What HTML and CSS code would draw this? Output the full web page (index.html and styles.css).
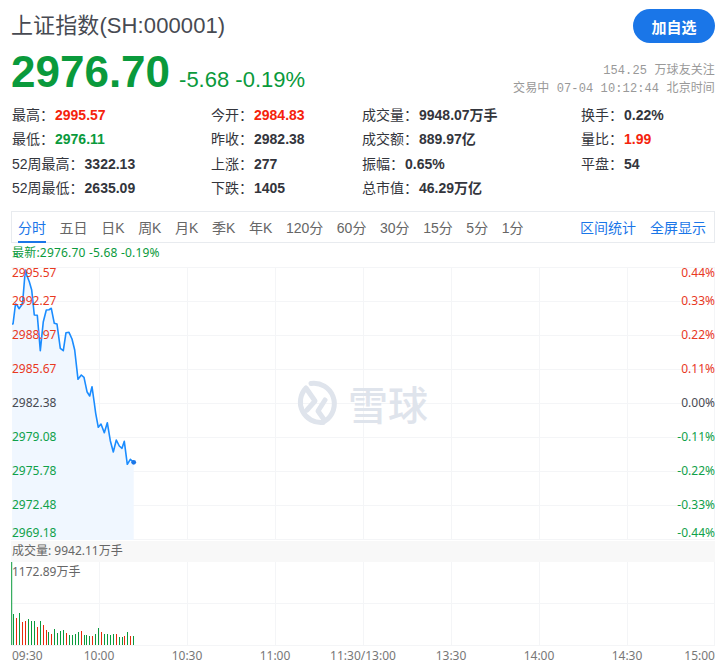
FILE: index.html
```html
<!DOCTYPE html>
<html lang="zh-CN">
<head>
    <meta charset="UTF-8">
    <title>上证指数(SH:000001)</title>
    <link rel="stylesheet" href="styles.css">
</head>
<body>
    <div class="page">
        <!-- Cabecera -->
        <div class="title-row">
            <h1 class="stock-name">上证指数(SH:000001)</h1>
            <button class="follow-btn">加自选</button>
        </div>

        <div class="price-row">
            <div class="price-main">
                <span class="price">2976.70</span>
                <span class="change">-5.68 -0.19%</span>
            </div>
            <div class="meta">
                <div>154.25 万球友关注</div>
                <div>交易中 07-04 10:12:44 北京时间</div>
            </div>
        </div>

        <!-- Tabla de datos -->
        <div class="stats">
            <div>最高：<b class="up">2995.57</b></div>
            <div>今开：<b class="up">2984.83</b></div>
            <div>成交量：<b>9948.07万手</b></div>
            <div>换手：<b>0.22%</b></div>
            <div>最低：<b class="down">2976.11</b></div>
            <div>昨收：<b>2982.38</b></div>
            <div>成交额：<b>889.97亿</b></div>
            <div>量比：<b class="up">1.99</b></div>
            <div>52周最高：<b>3322.13</b></div>
            <div>上涨：<b>277</b></div>
            <div>振幅：<b>0.65%</b></div>
            <div>平盘：<b>54</b></div>
            <div>52周最低：<b>2635.09</b></div>
            <div>下跌：<b>1405</b></div>
            <div>总市值：<b>46.29万亿</b></div>
        </div>

        <!-- Pestañas -->
        <div class="tabs">
            <div class="tab-list">
                <a class="tab active">分时</a>
                <a class="tab">五日</a>
                <a class="tab">日K</a>
                <a class="tab">周K</a>
                <a class="tab">月K</a>
                <a class="tab">季K</a>
                <a class="tab">年K</a>
                <a class="tab">120分</a>
                <a class="tab">60分</a>
                <a class="tab">30分</a>
                <a class="tab">15分</a>
                <a class="tab">5分</a>
                <a class="tab">1分</a>
            </div>
            <div class="tab-tools">
                <a>区间统计</a>
                <a>全屏显示</a>
            </div>
        </div>

        <div class="latest">最新:2976.70 -5.68 -0.19%</div>

        <!-- Gráfico de precio -->
        <div class="price-chart">
            <svg class="chart-svg" width="705" height="274" viewBox="11 267 705 274">
                <path class="grid" d="M11 267.5H715M11 301.5H715M11 335.5H715M11 369.5H715M11 403.5H715M11 437.5H715M11 471.5H715M11 505.5H715M11 539.5H715"/>
                <path class="grid" d="M99.5 267V539M187.5 267V539M275.5 267V539M363.5 267V539M451.5 267V539M539.5 267V539M627.5 267V539M714.5 267V539"/>
                <path class="area" d="M12 324L13 324L15.5 304L17 305L19 308.7L21.7 305L22.7 301.7L25.3 270L26.7 275L29.3 281.7L31.7 290L34.3 315L37.3 315.3L40.3 350.7L43.3 321.7L46.3 310L49 309.7L51.3 308.3L54.3 323.3L57 324L60.3 348.3L63.3 350.7L66 332.7L69 332.3L72 339L74.7 350L78 379.3L81.3 375L84 377.3L87 391.7L89.7 396L92 386.7L94.3 403L95.7 413.3L98.3 427.3L101 424L104.3 432.7L107.3 422.7L110.3 440.7L113.3 452L116.3 440L119.3 446L122 448.3L124.3 441.3L127.3 464.3L130.3 459.3L133.7 462.3V540H12Z"/>
                <path class="line" d="M12 324L13 324L15.5 304L17 305L19 308.7L21.7 305L22.7 301.7L25.3 270L26.7 275L29.3 281.7L31.7 290L34.3 315L37.3 315.3L40.3 350.7L43.3 321.7L46.3 310L49 309.7L51.3 308.3L54.3 323.3L57 324L60.3 348.3L63.3 350.7L66 332.7L69 332.3L72 339L74.7 350L78 379.3L81.3 375L84 377.3L87 391.7L89.7 396L92 386.7L94.3 403L95.7 413.3L98.3 427.3L101 424L104.3 432.7L107.3 422.7L110.3 440.7L113.3 452L116.3 440L119.3 446L122 448.3L124.3 441.3L127.3 464.3L130.3 459.3L133.7 462.3"/>
                <circle class="dot" cx="133.7" cy="462.3" r="2.4"/>
            </svg>

            <div class="watermark">
                <svg class="watermark-logo" width="50" height="50" viewBox="0 0 50 50">
                    <path d="M19 5.5A20.5 20.5 0 0 1 33 43L26 33L33 22"/>
                    <path d="M31 44.5A20.5 20.5 0 0 1 14 10L23 23L15 32"/>
                </svg>
                <span>雪球</span>
            </div>

            <div class="scale scale-left">
                <span class="up first">2995.57</span>
                <span class="up">2992.27</span>
                <span class="up">2988.97</span>
                <span class="up">2985.67</span>
                <span>2982.38</span>
                <span class="down">2979.08</span>
                <span class="down">2975.78</span>
                <span class="down">2972.48</span>
                <span class="down last">2969.18</span>
            </div>
            <div class="scale scale-right">
                <span class="up first">0.44%</span>
                <span class="up">0.33%</span>
                <span class="up">0.22%</span>
                <span class="up">0.11%</span>
                <span>0.00%</span>
                <span class="down">-0.11%</span>
                <span class="down">-0.22%</span>
                <span class="down">-0.33%</span>
                <span class="down last">-0.44%</span>
            </div>
        </div>

        <div class="volume-head">成交量: 9942.11万手</div>

        <!-- Gráfico de volumen -->
        <div class="volume-chart">
            <svg class="chart-svg" width="705" height="84" viewBox="11 562 705 84">
                <path class="grid" d="M11 603.5H715M11 645.5H715"/>
                <path class="grid" d="M99.5 562V645M187.5 562V645M275.5 562V645M363.5 562V645M451.5 562V645M539.5 562V645M627.5 562V645M714.5 562V645"/>
                <path class="bar-green" d="M11.7 562V645M13.5 614V645M19.5 613V645M28.5 619V645M31.5 621V645M34.5 621V645M40.5 621V645M48.5 632V645M54.5 629V645M57.5 633V645M60.5 631V645M63.5 630V645M69.5 635V645M72.5 635V645M75.5 634V645M78.5 632V645M84.5 635V645M86.5 635V645M89.5 636V645M95.5 634V645M98.5 628V645M104.5 634V645M107.5 634V645M110.5 635V645M113.5 634V645M119.5 637V645M122.5 637V645M127.5 632V645M133.5 636V645"/>
                <path class="bar-red" d="M16.5 618V645M22.5 622V645M25.5 621V645M37.5 627V645M43.5 625V645M46.5 630V645M51.5 634V645M66.5 633V645M81.5 631V645M92.5 636V645M101.5 632V645M116.5 634V645M124.5 636V645M130.5 636V645"/>
            </svg>
            <span class="volume-max">1172.89万手</span>
        </div>

        <div class="time-axis">
            <span>09:30</span>
            <span>10:00</span>
            <span>10:30</span>
            <span>11:00</span>
            <span>11:30/13:00</span>
            <span>13:30</span>
            <span>14:00</span>
            <span>14:30</span>
            <span>15:00</span>
        </div>
    </div>
</body>
</html>
```

FILE: styles.css
```css
* {
    box-sizing: border-box;
}

body {
    margin: 0;
    background-color: #fff;
    color: #33353c;
    font-family: "Liberation Sans", "Noto Sans CJK SC", sans-serif;
}

.page {
    width: 723px;
    height: 670px;
    padding: 9px 8px 0 12px;
    overflow: hidden;
}

.up {
    color: #f5230c;
}

.down {
    color: #0a9a3c;
}

/* Cabecera */
.title-row {
    display: flex;
    justify-content: space-between;
    align-items: flex-start;
    height: 35px;
}

.stock-name {
    margin: 0 0 0 -1px;
    font-size: 22px;
    font-weight: 400;
    line-height: 34px;
    letter-spacing: 0.1px;
    color: #474a52;
}

.follow-btn {
    width: 82px;
    height: 34px;
    border: none;
    border-radius: 17px;
    background-color: #1a76e8;
    color: #fff;
    font-family: inherit;
    font-size: 15px;
    font-weight: 700;
}

.price-row {
    display: flex;
    justify-content: space-between;
    align-items: center;
    height: 56px;
}

.price-main {
    display: flex;
    align-items: baseline;
    gap: 9px;
    margin-left: -1px;
    color: #0a9a3c;
}

.price {
    font-size: 44px;
    font-weight: 700;
    line-height: 56px;
}

.change {
    font-size: 22px;
}

.meta {
    align-self: flex-end;
    margin-bottom: 2px;
    text-align: right;
    color: #999;
    font-family: "Liberation Mono", "Noto Sans CJK SC", monospace;
    font-size: 12px;
    line-height: 18px;
    letter-spacing: 0.12px;
}

/* Tabla de datos */
.stats {
    display: grid;
    grid-template-columns: 199px 151px 219px 1fr;
    grid-auto-rows: 24.4px;
    height: 111px;
    padding-top: 3px;
    font-size: 14px;
    line-height: 24px;
}

.stats b {
    margin-left: 1px;
}

/* Pestañas */
.tabs {
    display: flex;
    justify-content: space-between;
    height: 32px;
    margin-left: -1px;
    padding: 0 8px 0 6px;
    border: 1px solid #e8ebef;
}

.tab-list {
    display: flex;
    gap: 13.6px;
}

.tab {
    height: 31px;
    color: #666;
    font-size: 14px;
    line-height: 33px;
}

.tab.active {
    color: #1a76e8;
    border-bottom: 2px solid #1a76e8;
}

.tab-tools {
    display: flex;
    gap: 14px;
    color: #1a76e8;
    font-size: 14px;
    line-height: 33px;
}

.latest {
    height: 24px;
    font-family: "Noto Sans", "Noto Sans CJK SC", sans-serif;
    font-size: 12px;
    line-height: 20px;
    letter-spacing: 0.2px;
    color: #0a9a3c;
}

/* Gráficos */
.price-chart {
    position: relative;
    height: 274px;
    margin-left: -1px;
}

.chart-svg {
    display: block;
}

.grid {
    fill: none;
    stroke: #f4f5f7;
    stroke-width: 1;
}

.area {
    fill: #f0f7ff;
}

.line {
    fill: none;
    stroke: #1a8cff;
    stroke-width: 1.6;
    stroke-linejoin: round;
}

.dot {
    fill: #1a76e8;
}

.watermark {
    position: absolute;
    top: 111px;
    left: 281px;
    display: flex;
    align-items: center;
    gap: 6px;
    color: #dfe4ec;
    font-family: "Noto Sans CJK SC", sans-serif;
    font-size: 40px;
    font-weight: 500;
    line-height: 50px;
}

.watermark-logo path {
    fill: none;
    stroke: #dfe4ec;
    stroke-width: 5;
    stroke-linecap: round;
    stroke-linejoin: round;
}

.scale {
    position: absolute;
    top: -17px;
    display: flex;
    flex-direction: column;
    font-family: "Noto Sans", sans-serif;
    font-size: 12px;
    color: #474a52;
}

.scale span {
    height: 34px;
    line-height: 34px;
}

.scale .up {
    color: #e8391f;
}

.scale .down {
    color: #0fa14a;
}

.scale .first {
    position: relative;
    top: 6px;
}

.scale .last {
    position: relative;
    top: -6px;
}

.scale-left {
    left: 1px;
}

.scale-right {
    right: 0;
    text-align: right;
}

.volume-head {
    height: 21px;
    margin-left: -1px;
    padding-left: 1px;
    background-color: #f8f8f8;
    color: #666;
    font-family: "Noto Sans", "Noto Sans CJK SC", sans-serif;
    font-size: 12px;
    line-height: 19px;
}

.volume-chart {
    position: relative;
    height: 84px;
    margin-left: -1px;
}

.bar-green,
.bar-red {
    fill: none;
    stroke-width: 1;
}

.bar-green {
    stroke: #0a9a3c;
}

.bar-red {
    stroke: #e8290b;
}

.volume-max {
    position: absolute;
    top: 1px;
    left: 1px;
    color: #666;
    font-family: "Noto Sans", "Noto Sans CJK SC", sans-serif;
    font-size: 12px;
    line-height: 18px;
}

.time-axis {
    display: grid;
    grid-template-columns: 43px repeat(7, 88px) 1fr;
    height: 20px;
    color: #777;
    font-family: "Noto Sans", sans-serif;
    font-size: 12px;
    line-height: 19px;
}

.time-axis span {
    white-space: nowrap;
    text-align: center;
}

.time-axis span:first-child {
    text-align: left;
}

.time-axis span:last-child {
    text-align: right;
}
```
